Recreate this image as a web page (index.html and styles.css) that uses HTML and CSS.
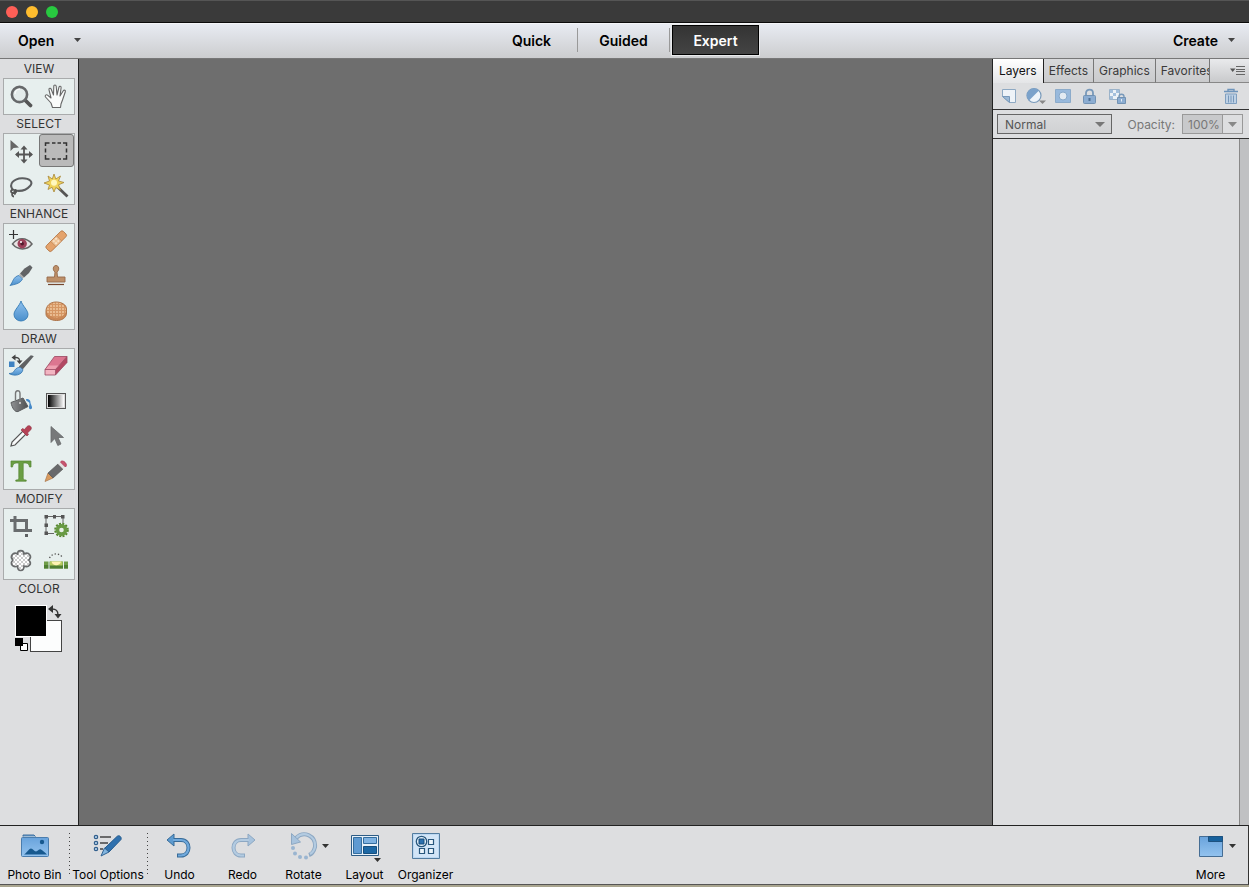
FILE: index.html
```html
<!DOCTYPE html>
<html lang="en">
<head>
<meta charset="utf-8">
<meta name="viewport" content="width=device-width, initial-scale=1">
<title>Photo Editor</title>
<link rel="stylesheet" href="styles.css">
</head>
<body>
<svg class="defs" width="0" height="0" aria-hidden="true">
  <defs>
    <linearGradient id="blue" x1="0" y1="0" x2="0" y2="1"><stop offset="0" stop-color="#8fc1ee"/><stop offset="1" stop-color="#4a8fcc"/></linearGradient>
    <linearGradient id="sky" x1="0" y1="0" x2="0" y2="1"><stop offset="0" stop-color="#69a3dc"/><stop offset="1" stop-color="#93c3ef"/></linearGradient>
    <linearGradient id="steel" x1="0" y1="0" x2="1" y2="0"><stop offset="0" stop-color="#909294"/><stop offset="1" stop-color="#4c4e50"/></linearGradient>
    <linearGradient id="fade" x1="0" y1="0" x2="1" y2="0"><stop offset="0" stop-color="#000"/><stop offset="1" stop-color="#fff"/></linearGradient>
    <pattern id="check" width="4" height="4" patternUnits="userSpaceOnUse"><rect width="4" height="4" fill="#fff"/><path d="M0 0h2v2H0zM2 2h2v2H2z" fill="#ccc"/></pattern>
    <pattern id="sponge" width="3" height="3" patternUnits="userSpaceOnUse"><rect width="3" height="3" fill="#d59663"/><circle cx="1" cy="1" r=".9" fill="#f3cda4"/></pattern>
  </defs>
</svg>
<div class="app">
  <header class="titlebar">
    <button class="light red" aria-label="Close"></button>
    <button class="light yellow" aria-label="Minimize"></button>
    <button class="light green" aria-label="Zoom"></button>
  </header>

  <div class="menubar">
    <button class="menu open">Open <svg class="caret" width="7" height="4" viewBox="0 0 7 4"><path d="M0 0h7L3.500 4z"/></svg></button>
    <nav class="modes">
      <button class="mode">Quick</button>
      <button class="mode">Guided</button>
      <button class="mode active">Expert</button>
    </nav>
    <button class="menu create">Create <svg class="caret" width="7" height="4" viewBox="0 0 7 4"><path d="M0 0h7L3.500 4z"/></svg></button>
  </div>

  <div class="workspace">
    <aside class="tools">
      <h2 class="group-name">VIEW</h2>
      <div class="group">
        <button class="tool" aria-label="Zoom"><svg viewBox="0 0 24 24"><path d="M16 16l5.500 5.500" stroke="#555" stroke-width="3.800" stroke-linecap="round"/><circle cx="10.500" cy="10.500" r="7.600" fill="#e3ebea" stroke="#66686a" stroke-width="2.600"/><path d="M6 10a5 5 0 0 1 5-5" stroke="#fff" fill="none"/></svg></button>
        <button class="tool" aria-label="Hand"><svg viewBox="0 0 24 24"><path d="M8.500 23.500L7 19 1.500 13c-1-1.500.8-2.800 2-1.800L7 14 5 5.800c-.4-1.800 1.600-2.200 2.200-.6L9.500 11 9.800 2.300c0-1.800 2.200-1.800 2.400 0L13 11l2-7.800c.4-1.500 2.400-1 2.100.5L16 12l3.300-5.200c.9-1.300 2.500-.4 2 .9L18.500 16 17 20l-.5 3.500z" fill="#fafcfb" stroke="#666" stroke-width="1.100" stroke-linejoin="round"/></svg></button>
      </div>

      <h2 class="group-name">SELECT</h2>
      <div class="group">
        <button class="tool" aria-label="Move"><svg viewBox="0 0 24 24"><path d="M1.500 1v11L4.500 9l5.500-.5z" fill="#666"/><path d="M15 9v13M7.500 15.500h15" stroke="#555" stroke-width="1.800"/><path d="M15 6.500l3.500 4h-7zM15 24.500l3.500-4h-7zM6 15.500l4-3.500v7zM24 15.500l-4-3.500v7z" fill="#555"/></svg></button>
        <button class="tool selected" aria-label="Rectangular Marquee" aria-pressed="true"><svg viewBox="0 0 24 24"><path d="M1.500 7V4h4M8 4h3.500M13.500 4H17M19 4h3.500v3M22.500 9.500v4M22.500 16v4H19M17 20h-3.500M11.500 20H8M5.500 20h-4v-4M1.500 13.500v-4" fill="none" stroke="#333" stroke-width="1.500"/></svg></button>
        <button class="tool" aria-label="Lasso"><svg viewBox="0 0 24 24"><path d="M4 16C-1 10 5 4.500 13 4.200c8-.2 11.500 4 8 7.800-3.500 4-9.500 5.500-15 4.500" fill="none" stroke="#5c5e60" stroke-width="2"/><path d="M5.500 16c-3-1.500-5 2-2 3 3 .5 5-1.500 3-3-1.500 1-2 3 0 4.500M3.500 19c-1 2 0 3.500 1.500 3.500" fill="none" stroke="#555" stroke-width="1.800"/></svg></button>
        <button class="tool" aria-label="Magic Wand"><svg viewBox="0 0 24 24"><path d="M13.500 13l10 9.500" stroke="#555" stroke-width="2.800"/><path d="M10 0l1.800 5 4.700-3-2 5 5.500 1.500-5.500 2.300 2 5.200-4.700-2.500L10 18l-1.900-4.700L4 15.500 5.500 11 0 9l5.500-2L4 2l4.300 3z" fill="#f0d45b" stroke="#a9883a" stroke-width=".8"/><circle cx="10" cy="8.700" r="3" fill="#fff8be"/></svg></button>
      </div>

      <h2 class="group-name">ENHANCE</h2>
      <div class="group">
        <button class="tool" aria-label="Red Eye Removal"><svg viewBox="0 0 24 24"><path d="M4.500 1v9M0 5.500h9" stroke="#333" stroke-width="1.200"/><path d="M3.500 15c5-7 14-7 19.500 0-5 6.500-14 6.500-19.500 0z" fill="#e9e4e4" stroke="#666" stroke-width="1.500"/><circle cx="13.200" cy="14.800" r="4.700" fill="#9c4059"/><circle cx="13.200" cy="14.800" r="1.800" fill="#521b2d"/><circle cx="12" cy="13" r="1" fill="#fff"/></svg></button>
        <button class="tool" aria-label="Spot Healing"><svg viewBox="0 0 24 24"><g transform="rotate(-45 12 12)"><rect x="0" y="8.500" width="24" height="7.500" rx="2" fill="#e4a36c" stroke="#b17242" stroke-width=".8"/><path d="M8 9h8v6.500H8z" fill="#efc69c"/><path d="M8 8.500V16M16 8.500V16" stroke="#bd8050" stroke-width=".7"/><path d="M10.500 10.500h.1M13.500 10.500h.1M10.500 13.500h.1M13.500 13.500h.1" stroke="#fff2df" stroke-width="1.500" stroke-linecap="round"/></g></svg></button>
        <button class="tool" aria-label="Smart Brush"><svg viewBox="0 0 24 24"><path d="M23.500 3.500L21 1l-5.500 3.500L11 9.500l4 4 5-4.500z" fill="#626466"/><path d="M11 9.500l4 4-1.500 1-3.500-3.500z" fill="#aaa"/><path d="M10 11.500l3.500 3.500C11 20 5 20.500 1 21.500c3-3 3-9 9-10z" fill="url(#blue)" stroke="#3676ae" stroke-width=".8"/></svg></button>
        <button class="tool" aria-label="Clone Stamp"><svg viewBox="0 0 24 24"><path d="M10.500 13l.5-5c-2.800-2-2-6.500 1-6.500s3.800 4.500 1 6.500l.5 5h7.500v5H3v-5z" fill="#bd9069" stroke="#95694a" stroke-width=".9"/><path d="M4 20.500h16" stroke="#76472e" stroke-width="1.200"/></svg></button>
        <button class="tool" aria-label="Blur"><svg viewBox="0 0 24 24"><path d="M12 2c1.500 5 7 9 7 13.500a7 6.500 0 0 1-14 0C5 11 10.500 7 12 2z" fill="url(#blue)" stroke="#337bb4" stroke-width=".9"/></svg></button>
        <button class="tool" aria-label="Sponge"><svg viewBox="0 0 24 24"><path d="M2 12c0-5 4-9 10-9s10.500 3 10.500 7v4c0 5-5 7.500-10 7.500S2 19 2 15z" fill="#ca8856" stroke="#ad754b"/><ellipse cx="12.300" cy="11" rx="9.800" ry="7.500" fill="url(#sponge)"/></svg></button>
      </div>

      <h2 class="group-name">DRAW</h2>
      <div class="group">
        <button class="tool" aria-label="Impressionist Brush"><svg viewBox="0 0 24 24"><path d="M0 7.500h5.500V13H0z" fill="#3e82c2"/><path d="M5 3.500h2c3 0 4 2 3.500 4.500" stroke="#444" stroke-width="1.300" fill="none"/><path d="M2.500 3.500L6.500.5v6zM7.500 6.500h6l-3 3.500z" fill="#444"/><path d="M23.500 2.500L22 2 11 12.500l2.500 2z" fill="#606264" stroke="#606264" stroke-width="1.500"/><path d="M11.500 13.500l2.500 2C13 21.500 5 22.500 0 19.500c3 0 4.500-1 5.500-3 1.500-2.500 4-3.500 6-3z" fill="url(#blue)" stroke="#3676ae" stroke-width=".8"/></svg></button>
        <button class="tool" aria-label="Eraser"><svg viewBox="0 0 24 24"><path d="M10.500 2.500H23L11.500 15.500H1z" fill="#dc7690"/><path d="M23 2.500v6L11.500 21v-5.500z" fill="#b34763"/><path d="M1 15.500h10.500V21H1z" fill="#f2b5c2"/><path d="M4.500 11.500h10.500l-3.500 4H1z" fill="#efa0b1"/><path d="M1 15.500L10.500 2.500H23v6L11.500 21H1zM1 15.500h10.500V21M11.500 15.500L23 2.500" fill="none" stroke="#994660" stroke-width=".8"/></svg></button>
        <button class="tool" aria-label="Paint Bucket"><svg viewBox="0 0 24 24"><path d="M17 10c4 0 4.500 2 4.500 4l1.500 4c.5 3-3.500 3-3 0l.5-3c0-2-1-2-3-3z" fill="#4488c8"/><path d="M2 13.500L14 9l5 8.500L9 22.500c-3 1-6-3.500-7-9z" fill="url(#steel)" stroke="#5b5d5f"/><path d="M6.500 11V4.500C6.500 1 11 .500 11 4.500V14" fill="none" stroke="#777" stroke-width="1.400"/><circle cx="11" cy="14" r="1" fill="#ddd"/></svg></button>
        <button class="tool" aria-label="Gradient"><svg viewBox="0 0 24 24"><rect x="2.500" y="4.500" width="19" height="15" fill="#ddd" stroke="#555"/><rect x="4" y="6" width="16" height="12" fill="url(#fade)"/></svg></button>
        <button class="tool" aria-label="Color Picker"><svg viewBox="0 0 24 24"><path d="M2 22l1-4L14 7l3 3L6 21z" fill="#f8fafa" stroke="#555" stroke-width="1.200"/><path d="M12 6l1.500-1.500 2 1L18 2.500c2.500-2.500 6 1 3.500 3.500L18.500 9l1 1.500L18 12z" fill="#b54155" stroke="#8d3042" stroke-width=".6"/></svg></button>
        <button class="tool" aria-label="Custom Shape Selection"><svg viewBox="0 0 24 24"><path d="M7 2.500v16l3.800-4 3 7 3.200-1.500-3-6.500h5.500z" fill="#77797a" stroke="#67696b" stroke-width=".8"/></svg></button>
        <button class="tool" aria-label="Type"><svg viewBox="0 0 24 24"><path d="M2 2h20v6h-1.500c-.5-3-1.500-4-4-4h-2.300v14.500c0 2 .5 2.500 3 2.500v1.200H6.800V21c2.500 0 3-.5 3-2.500V4H7.500c-2.500 0-3.500 1-4 4H2z" fill="#6b9e44" stroke="#558532" stroke-width=".7"/></svg></button>
        <button class="tool" aria-label="Pencil"><svg viewBox="0 0 24 24"><path d="M1 22.500L4 14l5 5z" fill="#d99b5e" stroke="#a9754a" stroke-width=".7"/><path d="M4 14L14 5l5 5L9 19z" fill="#68696b" stroke="#555" stroke-width=".7"/><path d="M14 5l2.500-2.500 5 5L19 10z" fill="#e2e2e2"/><path d="M16.500 3c2-3 8 2 5 5z" fill="#c9556f" stroke="#b4405e"/></svg></button>
      </div>

      <h2 class="group-name">MODIFY</h2>
      <div class="group">
        <button class="tool" aria-label="Crop"><svg viewBox="0 0 24 24"><path d="M6 2v14.500h17M1 6.500h16.500V18" fill="none" stroke="#696c6e" stroke-width="3"/><path d="M16 20h3v3h-3z" fill="#5d6062"/></svg></button>
        <button class="tool" aria-label="Recompose"><svg viewBox="0 0 24 24"><path d="M10 19.500H2v-17h17V9" fill="none" stroke="#666"/><path d="M.5 1h3.500v3.500H.5zM9 1h3v3.500H9zM17 1h3.500v3.500H17zM.5 9.500H4V13H.5zM.5 17.500H4V21H.5z" fill="#555"/><circle cx="17.500" cy="16" r="6.300" fill="none" stroke="#57872f" stroke-width="2" stroke-dasharray="2 1.300"/><circle cx="17.500" cy="16" r="4.100" fill="#e8efe8" stroke="#689a43" stroke-width="3.600"/></svg></button>
        <button class="tool" aria-label="Cookie Cutter"><svg viewBox="0 0 24 24"><path d="M8.500 5c0-4.500 6.500-4.500 6.500 0 5-2.500 8.500 2.500 4.800 6 3.700 4-.2 8-4.800 6 0 6-6.500 6-6.500 0-4.500 2-8-2-4.700-6C.5 7.500 4 2.500 8.500 5z" fill="url(#check)" stroke="#696b6c" stroke-width="1.700"/></svg></button>
        <button class="tool" aria-label="Straighten"><svg viewBox="0 0 24 24"><path d="M5.500 9c3-5.500 10-5.500 13.500 0" fill="none" stroke="#555" stroke-width="1.300" stroke-dasharray="1.300 2"/><path d="M0 12.500h24v7H0z" fill="#6f9d48"/><path d="M0 16h24v3.500H0z" fill="#4f7f32"/><path d="M6 12.500h12.500v4H6z" fill="#b6cb61"/><path d="M7.500 12.500h9.500c-1 5-8.500 5-9.500 0z" fill="#fff3b3"/><path d="M5 12v8M19.500 12v8" stroke="#e6efed"/></svg></button>
      </div>

      <h2 class="group-name">COLOR</h2>
      <div class="swatches">
        <button class="swatch back" aria-label="Background color"></button>
        <button class="swatch front" aria-label="Foreground color"></button>
        <button class="swap" aria-label="Swap colors"><svg width="14" height="14" viewBox="0 0 14 14"><path d="M4 4c4 0 6 1 6 6" fill="none" stroke="#333" stroke-width="1.400"/><path d="M5 0v8L0 4zM6.500 9h7L10 13.500z" fill="#333"/></svg></button>
        <button class="reset" aria-label="Default colors"><svg width="14" height="14" viewBox="0 0 14 14"><path d="M5.500 5.500h7v7h-7z" fill="#fff" stroke="#000"/><path d="M0 0h8v8H0z"/></svg></button>
      </div>
    </aside>

    <main class="canvas"></main>

    <section class="panel">
      <div class="tabs" role="tablist">
        <button class="tab current" role="tab" aria-selected="true">Layers</button>
        <button class="tab" role="tab">Effects</button>
        <button class="tab" role="tab">Graphics</button>
        <button class="tab cut" role="tab">Favorites</button>
        <button class="panel-menu" aria-label="Panel menu"><svg width="15" height="9" viewBox="0 0 15 9"><path d="M0 2.500h5.500L2.700 6z" fill="#555"/><path d="M6 .5h9M6 3.500h9M6 5.500h9M6 8.500h9" stroke="#666"/></svg></button>
      </div>
      <div class="layer-actions">
        <button class="action" aria-label="New layer"><svg width="20" height="18" viewBox="0 0 20 18"><path d="M3.500 2.500h13v13h-6l-7-6z" fill="#eef3f8" stroke="#8ea9c3"/><path d="M3.500 9.500h7v6z" fill="#9cb9d6" stroke="#7899ba"/></svg></button>
        <button class="action" aria-label="Adjustment layer"><svg width="20" height="18" viewBox="0 0 20 18"><circle cx="8" cy="8.500" r="7" fill="#eef4fa" stroke="#7899ba" stroke-width="1.200"/><path d="M3 13.500A7 7 0 0 1 13 3.500z" fill="#7ba2cb"/><path d="M13 13.500h7L16.500 17z" fill="#888"/></svg></button>
        <button class="action" aria-label="Layer mask"><svg width="20" height="18" viewBox="0 0 20 18"><path d="M2.500 2.500h15v13h-15z" fill="#98b9dc" stroke="#8cabca"/><circle cx="10" cy="9" r="4" fill="#e2eaf2" stroke="#86a8ca"/></svg></button>
        <button class="action" aria-label="Lock layer"><svg width="20" height="18" viewBox="0 0 20 18"><path d="M6 9V6c0-4.500 7-4.500 7 0v3" fill="none" stroke="#7899ba" stroke-width="1.800"/><rect x="3.500" y="8.500" width="12" height="8" rx="1" fill="#8cadd2" stroke="#7292b3"/><path d="M9.500 11v3" stroke="#4f7095" stroke-width="2"/></svg></button>
        <button class="action" aria-label="Lock transparency"><svg width="20" height="18" viewBox="0 0 20 18"><path d="M2.500 2.500h10v10h-10z" fill="#edf2f7" stroke="#9bb3ca"/><path d="M3 3h3v3H3zM9 3h3v3H9zM6 6h3v3H6zM3 9h3v3H3z" fill="#a3bfdc"/><path d="M12 11V9.500c0-3 5-3 5 0V11" fill="none" stroke="#7899ba" stroke-width="1.400"/><path d="M10.500 10.500h8v6h-8z" fill="#8cadd2" stroke="#7292b3"/><path d="M14.500 12v2.500" stroke="#e5eef7"/></svg></button>
        <button class="action trash" aria-label="Delete layer"><svg width="16" height="18" viewBox="0 0 16 18"><path d="M5 4V2.500h6V4M1 4.500h14" fill="none" stroke="#6e94bb" stroke-width="1.400"/><path d="M2.500 7h11v9.500h-11z" fill="#bed1e5" stroke="#7f9fc0"/><path d="M5.500 8.500v7M8 8.500v7M10.500 8.500v7" stroke="#7898ba"/></svg></button>
      </div>
      <div class="blend">
        <span class="select-wrap">
          <select class="blend-mode" aria-label="Blend mode"><option>Normal</option><option>Multiply</option><option>Screen</option></select>
          <svg class="select-arrow" width="10" height="5" viewBox="0 0 10 5"><path d="M0 0h10L5 5z"/></svg>
        </span>
        <label class="opacity-label" for="opacity">Opacity:</label>
        <input class="opacity" id="opacity" type="text" value="100%">
        <button class="opacity-drop" aria-label="Opacity slider"><svg width="9" height="5" viewBox="0 0 9 5"><path d="M0 0h9L4.500 5z" fill="#888"/></svg></button>
      </div>
      <div class="layers"><div class="scrollbar"></div></div>
    </section>
  </div>

  <footer class="taskbar">
    <button class="task wide"><svg width="30" height="28" viewBox="0 0 30 28"><path d="M3 4.500V3h11l1.500 1.500" fill="#6499c9" stroke="#3c6f9e"/><rect x="1.500" y="5.500" width="27" height="19" rx="1" fill="url(#sky)" stroke="#4a7dae"/><path d="M4 22.500c2-1 5-6 7-6s3 3 5 3 3-3 5-2 4 3 6 5z" fill="#17598f"/><circle cx="22" cy="10" r="2.200" fill="#17598f"/></svg><span>Photo Bin</span></button>
    <button class="task wider divided"><svg width="30" height="28" viewBox="0 0 30 28"><g fill="#b8d3ea" stroke="#315f8d" stroke-width="1.200"><circle cx="3" cy="5" r="1.700"/><circle cx="3" cy="11" r="1.700"/><circle cx="3" cy="17" r="1.700"/></g><path d="M7 5h11M7 11h8M7 17h3" stroke="#444" stroke-width="1.500"/><path d="M24 4.500c2-2 5 .5 4 3L16 20l-4-4z" fill="#2f71ae" stroke="#245b8d"/><path d="M11.500 16l4.500 4-8 4z" fill="#82b5df" stroke="#306393"/></svg><span>Tool Options</span></button>
    <button class="task divided undo"><svg width="30" height="28" viewBox="0 0 30 28"><path d="M8 8h8c10 0 10 15.500 0 15.500h-4" fill="none" stroke="#376b98" stroke-width="4"/><path d="M2 8l7-6v12z" fill="#5d9bd0" stroke="#376b98"/><path d="M8 8h8c10 0 10 15.500 0 15.500h-3" fill="none" stroke="#70a9dc" stroke-width="2.200"/></svg><span>Undo</span></button>
    <button class="task"><svg width="30" height="28" viewBox="0 0 30 28"><path d="M21 8h-8C3 8 3 23.500 13 23.500h4" fill="none" stroke="#8da8c3" stroke-width="4"/><path d="M27 8l-7-6v12z" fill="#a8c3dd" stroke="#8da8c3"/><path d="M21 8h-8C3 8 3 23.500 13 23.500h3" fill="none" stroke="#b3cbe1" stroke-width="2.200"/></svg><span>Redo</span></button>
    <button class="task"><svg width="30" height="28" viewBox="0 0 30 28"><path d="M7 6c8-8 20-2 19 9-1 4-3 7-6 8" fill="none" stroke="#8da8c3" stroke-width="4"/><path d="M7 6c8-8 20-2 19 9-1 4-3 6-5 7" fill="none" stroke="#b3cbe1" stroke-width="2.200"/><path d="M2.500 1.500v11l9-2.500z" fill="#a8c3dd" stroke="#8da8c3"/><g fill="#9ab5d0"><circle cx="4" cy="16" r="2"/><circle cx="6" cy="21.500" r="2"/><circle cx="11" cy="25" r="2"/><circle cx="17" cy="25.500" r="2"/></g></svg><svg class="task-caret side" width="7" height="4" viewBox="0 0 7 4"><path d="M0 0h7L3.500 4z"/></svg><span>Rotate</span></button>
    <button class="task"><svg width="30" height="28" viewBox="0 0 30 28"><path d="M1.500 3.500h27v20h-27z" fill="#e8f1f9" stroke="#2c5c86"/><path d="M3.500 5.500h8v16h-8z" fill="#5e9ad2" stroke="#346e9f"/><path d="M13.500 5.500h13v6h-13z" fill="#7eb2e2" stroke="#346e9f"/><path d="M13.500 14.500h13v7h-13z" fill="#1d68a5" stroke="#164f7e"/></svg><svg class="task-caret low" width="7" height="4" viewBox="0 0 7 4"><path d="M0 0h7L3.500 4z"/></svg><span>Layout</span></button>
    <button class="task"><svg width="30" height="28" viewBox="0 0 30 28"><path d="M1.500 1.500h27v25h-27z" fill="#bcd8f2" stroke="#537c9f"/><path d="M3 3h24v22H3z" fill="#d2e5f7"/><circle cx="10.500" cy="9.500" r="5.200" fill="#e4f0fa" stroke="#28577d" stroke-width="1.300"/><path d="M8 7h5v5H8z" fill="#2c70ae" stroke="#164c7b"/><path d="M17.500 7.500h5v5h-5zM8.500 16.500h5v5h-5zM17.500 16.500h5v5h-5z" fill="#edf5fb" stroke="#28577d" stroke-width="1.200"/></svg><span>Organizer</span></button>
    <button class="task more"><svg width="30" height="28" viewBox="0 0 30 28"><path d="M3.500 4.500h23v20h-23z" fill="url(#sky)" stroke="#456d94"/><path d="M12.500 4.500h14v5h-14z" fill="#17619d" stroke="#1d5280"/></svg><svg class="task-caret side" width="7" height="4" viewBox="0 0 7 4"><path d="M0 0h7L3.500 4z"/></svg><span>More</span></button>
  </footer>
</div>
</body>
</html>
```
FILE: styles.css
```css
* {
  box-sizing: border-box;
}

body {
  margin: 0;
  font-family: Inter, Roboto, "Liberation Sans", sans-serif;
  font-size: 12px;
  color: #000;
  background: #aaa690;
}

button,
input,
select {
  margin: 0;
  padding: 0;
  border: 0;
  border-radius: 0;
  background: none;
  color: inherit;
  font: inherit;
}

.defs {
  position: absolute;
}

.app {
  display: flex;
  flex-direction: column;
  min-height: 100vh;
  padding-bottom: 2px;
}

.titlebar {
  display: flex;
  align-items: center;
  gap: 8px;
  height: 23px;
  padding: 0 6px;
  background: #3a3a3a;
  border-top: 1px solid #555;
  border-bottom: 1px solid #0b0b0b;
}

.light {
  width: 12px;
  height: 12px;
  border-radius: 50%;
}

.red { background: #ff5f57; }
.yellow { background: #ffbd2e; }
.green { background: #28c940; }

.menubar {
  display: grid;
  grid-template-columns: 1fr auto 1fr;
  align-items: center;
  height: 36px;
  padding-bottom: 2px;
  background: linear-gradient(#e8ebf2, #cccdcf);
  border-top: 1px solid #f4f5f8;
  border-bottom: 1px solid #777;
  font-size: 14px;
  font-weight: 600;
}

.menu {
  display: flex;
  align-items: center;
}

.caret {
  fill: #444;
}

.open {
  gap: 20px;
  padding-left: 18px;
}

.create {
  justify-self: end;
  gap: 10px;
  padding-right: 14px;
}

.modes {
  display: flex;
  align-items: center;
  margin-right: 4px;
}

.mode {
  width: 92px;
  height: 24px;
  border-right: 1px solid #999;
}

.mode.active {
  width: 87px;
  height: 30px;
  margin-left: 2px;
  color: #fff;
  background: linear-gradient(#343434, #444);
  border: 1px solid #000;
  outline: 1px solid #e8e9eb;
}

.workspace {
  display: flex;
  flex: 1;
}

.tools {
  width: 79px;
  padding: 0 3px;
  background: #dddee0;
  border-right: 1px solid #222;
}

.group-name {
  height: 19px;
  margin: 0;
  font-size: 12px;
  font-weight: 400;
  line-height: 19px;
  text-align: center;
  color: #333;
}

.group {
  display: grid;
  grid-template-columns: 1fr 1fr;
  grid-auto-rows: 35px;
  margin-bottom: -1px;
  background: #e7efee;
  border: 1px solid #a9abac;
}

.tool {
  display: grid;
  place-items: center;
  padding: 0 2px 1px 0;
}

.tool svg {
  width: 24px;
  height: 24px;
  overflow: visible;
}

.tool.selected {
  margin-bottom: 2px;
  padding: 0 1px 0 0;
  background: #bababa;
  border: 1px solid #777;
  border-radius: 3px;
}

.swatches {
  position: relative;
  width: 47px;
  height: 47px;
  margin: 7px 0 0 12px;
}

.swatch,
.swap,
.reset {
  position: absolute;
}

.swatch {
  width: 32px;
  height: 32px;
}

.front {
  top: 0;
  left: 0;
  background: #000;
  border: 1px solid #fff;
}

.back {
  right: 0;
  bottom: 0;
  background: #fcfdfd;
  border: 1px solid #444;
}

.swap {
  top: 0;
  right: 0;
  height: 14px;
}

.reset {
  bottom: 0;
  left: 0;
  height: 14px;
}

.canvas {
  flex: 1;
  background: #6e6e6e;
}

.panel {
  display: flex;
  flex-direction: column;
  width: 257px;
  background: #dddee0;
  border-left: 1px solid #222;
  color: #3a3a3a;
}

.tabs {
  display: flex;
  height: 24px;
}

.tab {
  padding: 0 5px;
  background: linear-gradient(#d8d9db, #cacbcd);
  border-right: 1px solid #777;
  border-bottom: 1px solid #888;
  white-space: nowrap;
}

.tab.current {
  padding: 0 6px 1px;
  color: #111;
  background: linear-gradient(#fff, #e4e5e7);
  border-right-color: #222;
  border-bottom: 0;
}

.tab.cut {
  width: 54px;
  overflow: hidden;
}

.panel-menu {
  display: flex;
  flex: 1;
  align-items: center;
  justify-content: flex-end;
  padding-right: 4px;
  background: linear-gradient(#e9eaec, #c9cacc);
  border-bottom: 1px solid #888;
}

.layer-actions {
  display: flex;
  align-items: center;
  gap: 7px;
  height: 27px;
  padding: 0 10px 0 6px;
  border-bottom: 1px solid #333;
}

.action {
  height: 18px;
}

.trash {
  margin-left: auto;
}

.blend {
  display: flex;
  align-items: center;
  height: 29px;
  padding: 0 6px 0 4px;
  border-bottom: 1px solid #333;
}

.select-wrap {
  position: relative;
}

.blend-mode {
  display: block;
  width: 115px;
  height: 20px;
  padding-left: 7px;
  appearance: none;
  background: linear-gradient(#dadbdd, #d0d1d3);
  border: 1px solid #666;
  color: #555;
}

.select-arrow {
  position: absolute;
  top: 8px;
  right: 7px;
  fill: #777;
  pointer-events: none;
}

.opacity-label {
  margin-left: auto;
  margin-right: 7px;
  color: #777;
}

.opacity {
  width: 41px;
  height: 20px;
  padding-left: 5px;
  background: #c8c9cb;
  border: 1px solid #999;
  color: #777;
}

.opacity-drop {
  display: grid;
  place-items: center;
  width: 20px;
  height: 20px;
  border: 1px solid #999;
  border-left: 0;
}

.layers {
  display: flex;
  flex: 1;
  justify-content: flex-end;
}

.scrollbar {
  width: 10px;
  background: #c0c1c3;
  border-left: 1px solid #888;
}

.taskbar {
  display: flex;
  height: 60px;
  background: #dddee0;
  border-top: 1px solid #222;
  border-right: 1px solid #333;
  border-bottom: 1px solid #555;
}

.task {
  position: relative;
  display: flex;
  flex-direction: column;
  align-items: center;
  gap: 7px;
  width: 61px;
  padding-top: 6px;
  line-height: 16px;
  white-space: nowrap;
}

.wide { width: 69px; }
.wider { width: 78px; }
.undo { width: 65px; }

.divided::before {
  content: "";
  position: absolute;
  top: 7px;
  left: 0;
  width: 1px;
  height: 42px;
  background: repeating-linear-gradient(#444 0 1px, transparent 1px 4px);
}

.task-caret {
  position: absolute;
  fill: #333;
}

.side {
  top: 18px;
  right: 5px;
}

.low {
  top: 32px;
  right: 14px;
}

.more {
  margin-left: auto;
  margin-right: 7px;
}
```
